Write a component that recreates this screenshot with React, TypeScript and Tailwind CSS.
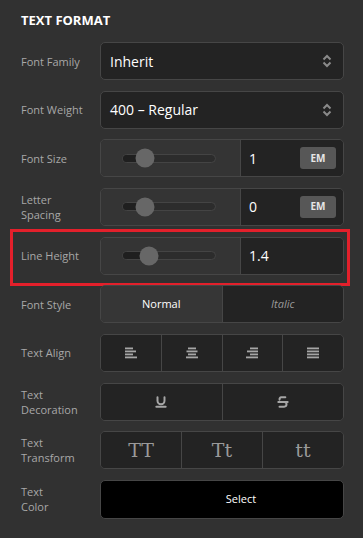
import React from 'react';
import { Underline, Strikethrough } from 'lucide-react';

const font = { fontFamily: '"Open Sans", "Noto Sans", sans-serif' };

const Label: React.FC<{ lines: string[] }> = ({ lines }) => (
  <div className="w-[79px] shrink-0 text-[11px] leading-[15px] text-[#a8a8a8]">
    {lines.map((l) => (
      <div key={l}>{l}</div>
    ))}
  </div>
);

const UpDown = () => (
  <svg width="10" height="14" viewBox="0 0 10 14" fill="none" stroke="#8a8a8a" strokeWidth="2">
    <path d="M1.5 5.5 L5 2 L8.5 5.5" />
    <path d="M1.5 8.5 L5 12 L8.5 8.5" />
  </svg>
);

const SelectBox: React.FC<{ value: string }> = ({ value }) => (
  <div className="flex h-[38px] flex-1 items-center justify-between rounded-[5px] border border-[#464646] bg-[#232323] pl-[9px] pr-[11px]">
    <span className="text-[14px] text-white">{value}</span>
    <UpDown />
  </div>
);

const SliderInput: React.FC<{ value: string; pos: number; unit?: boolean }> = ({ value, pos, unit }) => (
  <div className="flex h-[38px] flex-1 overflow-hidden rounded-[5px] border border-[#464646]">
    <div className="flex w-[139px] items-center bg-[#343434] pl-[21px]">
      <div className="relative h-[9px] w-[94px] rounded-full border border-[#444] bg-[#2c2c2c]">
        <div className="h-full rounded-full bg-[#1f1f1f]" style={{ width: pos }} />
        <div
          className="absolute top-1/2 h-[19px] w-[19px] -translate-x-1/2 -translate-y-1/2 rounded-full bg-[#676767]"
          style={{ left: pos }}
        />
      </div>
    </div>
    <div className="flex flex-1 items-center justify-between border-l border-[#464646] bg-[#232323] pl-[8px] pr-[7px]">
      <span className="text-[14px] text-white">{value}</span>
      {unit && (
        <span className="flex h-[22px] w-[36px] items-center justify-center rounded-[3px] bg-[#575757] text-[10px] font-bold text-[#e6e6e6]">
          EM
        </span>
      )}
    </div>
  </div>
);

const Segments: React.FC<{ items: React.ReactNode[]; active?: number }> = ({ items, active }) => (
  <div className="flex h-[38px] flex-1 overflow-hidden rounded-[5px] border border-[#464646]">
    {items.map((it, i) => (
      <div
        key={i}
        className={`flex flex-1 items-center justify-center ${i > 0 ? 'border-l border-[#464646]' : ''} ${
          active === i ? 'bg-[#363636]' : 'bg-[#232323]'
        }`}
      >
        {it}
      </div>
    ))}
  </div>
);

const AlignIcon: React.FC<{ kind: 'left' | 'center' | 'right' | 'justify' }> = ({ kind }) => {
  const widths = kind === 'justify' ? [12, 12, 12, 12] : [8, 11, 8, 12];
  return (
    <svg width="12" height="12" viewBox="0 0 12 12">
      {widths.map((w, i) => {
        const x = kind === 'left' || kind === 'justify' ? 0 : kind === 'right' ? 12 - w : (12 - w) / 2;
        return <rect key={i} x={x} y={i * 3 + 0.5} width={w} height="1.8" fill="#a6a6a6" />;
      })}
    </svg>
  );
};

const Row: React.FC<{ label: string[]; children: React.ReactNode; highlight?: boolean }> = ({ label, children, highlight }) => (
  <div className="relative flex items-center">
    {highlight && (
      <span className="pointer-events-none absolute -top-[8px] -bottom-[11px] -left-[11px] -right-[6px] border-[3px] border-[#e3202b]" />
    )}
    <Label lines={label} />
    {children}
  </div>
);

const serif = { fontFamily: '"DejaVu Serif", "Liberation Serif", serif' };

export default function App() {
  return (
    <div className="min-h-[538px] w-[363px] bg-[#313131] pl-[21px] pr-[19px] pt-[11px]" style={font}>
      <h3 className="text-[13px] font-bold leading-[18px] text-white">TEXT FORMAT</h3>
      <div className="mt-[13px] flex flex-col gap-[10.67px]">
        <Row label={['Font Family']}>
          <SelectBox value="Inherit" />
        </Row>
        <Row label={['Font Weight']}>
          <SelectBox value="400 – Regular" />
        </Row>
        <Row label={['Font Size']}>
          <SliderInput value="1" pos={22} unit />
        </Row>
        <Row label={['Letter', 'Spacing']}>
          <SliderInput value="0" pos={22} unit />
        </Row>
        <Row label={['Line Height']} highlight>
          <SliderInput value="1.4" pos={26} />
        </Row>
        <Row label={['Font Style']}>
          <Segments
            active={0}
            items={[
              <span className="text-[11px] text-white">Normal</span>,
              <span className="text-[11px] italic text-[#9a9a9a]">Italic</span>,
            ]}
          />
        </Row>
        <Row label={['Text Align']}>
          <Segments
            items={[
              <AlignIcon kind="left" />,
              <AlignIcon kind="center" />,
              <AlignIcon kind="right" />,
              <AlignIcon kind="justify" />,
            ]}
          />
        </Row>
        <Row label={['Text', 'Decoration']}>
          <Segments
            items={[
              <Underline size={14} strokeWidth={3.4} color="#a6a6a6" />,
              <Strikethrough size={14} strokeWidth={3.4} color="#a6a6a6" />,
            ]}
          />
        </Row>
        <Row label={['Text', 'Transform']}>
          <Segments
            items={['TT', 'Tt', 'tt'].map((t) => (
              <span className="text-[19px] text-[#9a9a9a]" style={serif}>
                {t}
              </span>
            ))}
          />
        </Row>
        <Row label={['Text', 'Color']}>
          <div className="flex h-[39px] flex-1 items-center justify-center rounded-[5px] border border-[#464646] bg-black pl-[38px]">
            <span className="text-[11px] text-white">Select</span>
          </div>
        </Row>
      </div>
    </div>
  );
}
